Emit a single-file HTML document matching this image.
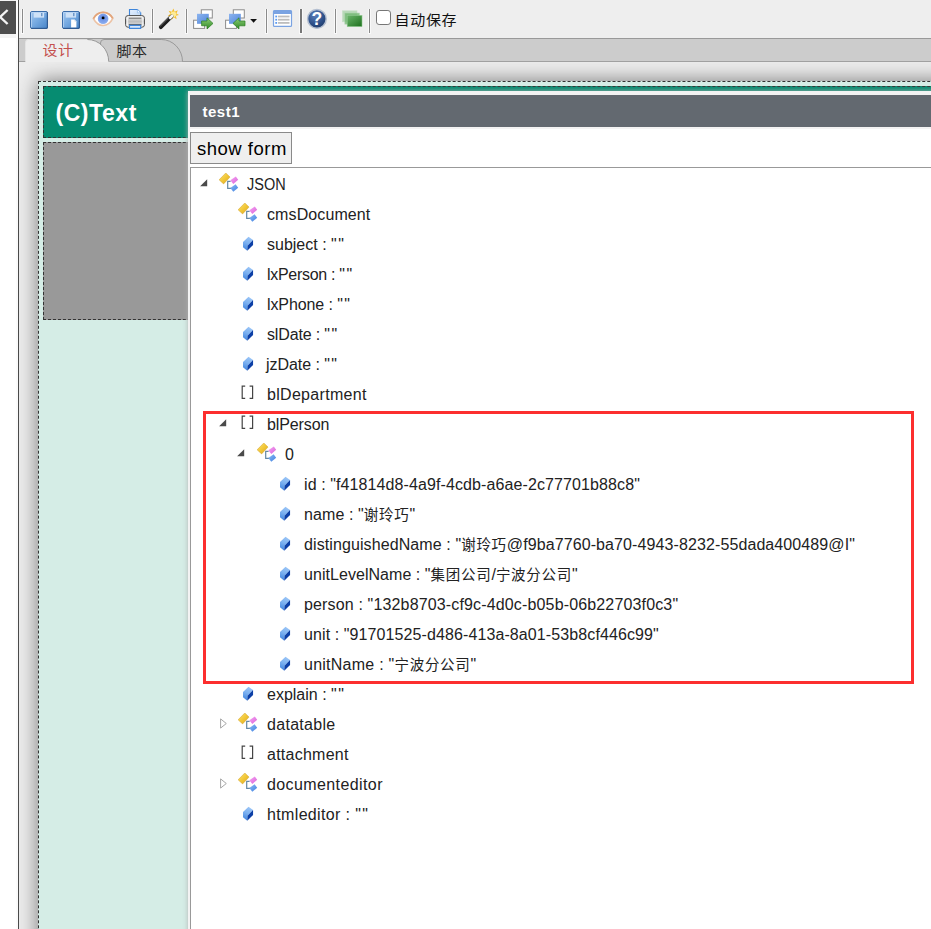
<!DOCTYPE html>
<html lang="zh-CN">
<head>
<meta charset="utf-8">
<title>form designer</title>
<style>
html,body{margin:0;padding:0;}
body{width:931px;height:929px;overflow:hidden;background:#fff;position:relative;
 font-family:"Liberation Sans","Noto Sans CJK SC",sans-serif;font-size:15px;color:#222;}
.abs{position:absolute;}
#collapse{left:0;top:1px;width:16px;height:32.6px;background:#4d4d4d;}
#vline{left:18px;top:0;width:1px;height:929px;background:#4a4a4a;}
#vstrip{left:16px;top:0;width:2px;height:929px;background:#fbfbfb;}
#toolbar{left:19px;top:0;width:912px;height:38px;background:#eeeeee;border-bottom:1px solid #999;}
.sep{position:absolute;top:9px;width:1px;height:24px;background:#8c8c8c;}
#tabbar{left:19px;top:39px;width:912px;height:22px;background:#cccccc;border-bottom:1px solid #a0a0a0;}
#design{left:19px;top:62px;width:912px;height:867px;background:#eeeeee;overflow:hidden;}
#form{left:19px;top:19px;width:1200px;height:1200px;background:#d5ede6;border:1px dashed #333;
 box-shadow:0 0 20px 0px #777;}
#fhead{left:4px;top:4px;width:1180px;height:50px;background:#068c71;border:1px dashed #333;}
#fhead span{position:absolute;left:11.5px;top:10.5px;font-weight:bold;font-size:23px;letter-spacing:0.55px;color:#fff;line-height:30px;white-space:nowrap;}
#fgray{left:4px;top:60px;width:1180px;height:176px;background:#999999;border:1px dashed #333;}
#dialog{left:187.5px;top:91.3px;width:760px;height:900px;background:#f3f3f3;box-shadow:0 0 5px 0 rgba(176,176,176,0.95);}
#dtitle{left:2.5px;top:3.7px;width:760px;height:32px;background:#636970;}
#dtitle span{position:absolute;left:12.5px;top:8px;font-weight:bold;font-size:15px;letter-spacing:0.5px;line-height:18px;color:#fff;}
#dcontent{left:2.5px;top:37.7px;width:760px;height:870px;background:#fff;}
#btn{left:0;top:3px;width:100px;height:30px;border:1px solid #8a8a8a;background:#efefef;}
#btn span{position:absolute;left:6px;top:4px;font-size:18.5px;letter-spacing:0.5px;line-height:24px;color:#000;white-space:nowrap;}
#tree{left:0;top:38px;width:760px;height:800px;border-top:1px solid #999;border-left:1px solid #999;background:#fff;}
.row{position:absolute;height:30px;line-height:30px;white-space:nowrap;font-size:16px;color:#222;}
.cjk{font-size:14.5px;letter-spacing:0.7px;}.q{letter-spacing:1.4px;}
#redbox{left:203px;top:411px;width:705px;height:267px;border:3px solid #fc2e2e;}
</style>
</head>
<body>
<svg width="0" height="0" style="position:absolute">
<defs>
<linearGradient id="g-yel" x1="0" y1="0" x2="1" y2="1"><stop offset="0" stop-color="#fbe27a"/><stop offset="0.5" stop-color="#f2c838"/><stop offset="1" stop-color="#dba41e"/></linearGradient>
<linearGradient id="g-gemt" x1="0.6" y1="0" x2="0.3" y2="1"><stop offset="0" stop-color="#9cc6f7"/><stop offset="0.45" stop-color="#7db2f1"/><stop offset="1" stop-color="#3f84df"/></linearGradient>
<linearGradient id="g-pink" x1="0" y1="0" x2="1" y2="1"><stop offset="0" stop-color="#f7a8f4"/><stop offset="1" stop-color="#d860d8"/></linearGradient>
<linearGradient id="g-blu" x1="0" y1="0" x2="1" y2="1"><stop offset="0" stop-color="#8cbcf5"/><stop offset="1" stop-color="#3f7fe0"/></linearGradient>
</defs>
</svg>

<div class="abs" style="left:0;top:0;width:16px;height:38px;background:#f3f3f3"></div>
<div id="vstrip" class="abs"></div>
<div id="vline" class="abs"></div>
<div id="collapse" class="abs"><svg width="16" height="32" viewBox="0 0 16 32"><path d="M7.6 9 L0.2 16 L7.6 23" fill="none" stroke="#f4f4f4" stroke-width="2.4"/></svg></div>
<div id="toolbar" class="abs">
<svg class="abs" style="left:-19px;top:0" width="480" height="38" viewBox="0 0 480 38">
<defs>
<linearGradient id="g-save" x1="0" y1="0" x2="1" y2="1"><stop offset="0" stop-color="#a4c9f0"/><stop offset="0.5" stop-color="#74a8e0"/><stop offset="1" stop-color="#4784c8"/></linearGradient>
<linearGradient id="g-prn" x1="0" y1="0" x2="0" y2="1"><stop offset="0" stop-color="#f4f4f4"/><stop offset="0.5" stop-color="#bdbdbd"/><stop offset="1" stop-color="#e8e8e8"/></linearGradient>
<linearGradient id="g-paper" x1="0" y1="0" x2="1" y2="1"><stop offset="0" stop-color="#e6f0fd"/><stop offset="1" stop-color="#bcd6f7"/></linearGradient>
<radialGradient id="g-help" cx="0.4" cy="0.3" r="0.8"><stop offset="0" stop-color="#5b80bb"/><stop offset="0.6" stop-color="#2d4f88"/><stop offset="1" stop-color="#1c3560"/></radialGradient>
<linearGradient id="g-grn" x1="0" y1="0" x2="1" y2="1"><stop offset="0" stop-color="#6bb56b"/><stop offset="1" stop-color="#1d701d"/></linearGradient>
<linearGradient id="g-arrow" x1="0" y1="0" x2="0" y2="1"><stop offset="0" stop-color="#8fce7a"/><stop offset="1" stop-color="#2f8a24"/></linearGradient>
<linearGradient id="g-blue" x1="0" y1="0" x2="1" y2="1"><stop offset="0" stop-color="#8db4ee"/><stop offset="1" stop-color="#4f86dc"/></linearGradient>
<radialGradient id="g-iris" cx="0.5" cy="0.4" r="0.6"><stop offset="0" stop-color="#5f86e0"/><stop offset="1" stop-color="#8fb0f0"/></radialGradient>
</defs>
<!-- separators -->
<g fill="#f9f9f9">
<rect x="21" y="9" width="3" height="25"/><rect x="151" y="9" width="3" height="25"/><rect x="185" y="9" width="3" height="25"/><rect x="265" y="9" width="3" height="25"/><rect x="299" y="9" width="4" height="25"/><rect x="334" y="9" width="3" height="25"/><rect x="368" y="9" width="3" height="25"/>
</g>
<g fill="#8a8a8a">
<rect x="22" y="9" width="1" height="24"/>
<rect x="152" y="9" width="1" height="24"/>
<rect x="186" y="9" width="1" height="24"/>
<rect x="266" y="9" width="1" height="24"/>
<rect x="300" y="9" width="2" height="24" fill="#777"/>
<rect x="335" y="9" width="1" height="24"/>
<rect x="369" y="9" width="1" height="24"/>
</g>
<!-- save -->
<g id="ic-save">
<rect x="30.5" y="11.5" width="17" height="17" rx="1.5" fill="url(#g-save)" stroke="#3d6eaa" stroke-width="1"/>
<rect x="33.7" y="12.6" width="10.4" height="5" fill="#cfe2f7"/>
<rect x="41" y="13" width="1.5" height="3.2" fill="#6d97c9"/>
<path d="M31.5 27.5 L31.5 12.5 L46.5 12.5" fill="none" stroke="#c4ddf7" stroke-width="0.8" opacity="0.8"/>
<path d="M31 28.3 L47.3 28.3 L47.3 12" fill="none" stroke="#2c5288" stroke-width="1" opacity="0.85"/>
</g>
<!-- save as -->
<g>
<rect x="62.5" y="11.5" width="17" height="17" rx="1.5" fill="url(#g-save)" stroke="#3d6eaa" stroke-width="1"/>
<rect x="65.7" y="12.6" width="10.4" height="5" fill="#cfe2f7"/>
<rect x="73" y="13" width="1.5" height="3.2" fill="#6d97c9"/>
<path d="M63.5 27.5 L63.5 12.5 L78.5 12.5" fill="none" stroke="#c4ddf7" stroke-width="0.8" opacity="0.8"/>
<path d="M71.1 19.5 L74.6 19.5 L76.4 21.5 L76.4 27.4 L71.1 27.4 Z" fill="#ffffff"/>
<path d="M74.6 19.5 L74.6 21.5 L76.4 21.5 Z" fill="#c9d3e0"/>
<path d="M63 28.3 L79.3 28.3 L79.3 12" fill="none" stroke="#2c5288" stroke-width="1" opacity="0.85"/>
</g>
<!-- eye -->
<g>
<path d="M93.4 18.6 C96 13.6 99.5 12.3 103.1 12.3 C107 12.3 110.5 13.8 112.8 18.4 C110.5 23 107 25.5 103.1 25.5 C99.5 25.5 96 23.4 93.4 18.6 Z" fill="#fff" stroke="#ecc3a6" stroke-width="1.7"/>
<path d="M93.4 18.6 C96 13.6 99.5 12.3 103.1 12.3 C107 12.3 110.5 13.8 112.8 18.4" fill="none" stroke="#e2a57c" stroke-width="1.8"/>
<circle cx="103.1" cy="18.7" r="5.3" fill="url(#g-iris)"/>
<circle cx="103.1" cy="17.9" r="1.45" fill="#000"/>
</g>
<!-- printer -->
<g>
<path d="M129.5 17.5 L129.5 9.5 L137.4 9.5 L140.7 12.8 L140.7 17.5 Z" fill="url(#g-paper)" stroke="#3f86da" stroke-width="1.1"/>
<path d="M137.4 9.5 L137.4 12.8 L140.7 12.8" fill="#f3f8fe" stroke="#7fb0ea" stroke-width="0.6"/>
<rect x="125.5" y="15.5" width="19" height="11.8" rx="2.8" fill="url(#g-prn)" stroke="#555" stroke-width="1"/>
<rect x="128.8" y="17.7" width="12.6" height="1" fill="#6e6e6e"/>
<rect x="126.6" y="17" width="1.6" height="9" fill="#fff" opacity="0.7"/>
<rect x="141.8" y="17" width="1.6" height="9" fill="#fff" opacity="0.6"/>
<rect x="128.8" y="24.2" width="12.6" height="1.2" fill="#4a4a4a"/>
<path d="M129.5 25.4 L140.7 25.4 L140.7 28.4 L129.5 28.4 Z" fill="#d9e8fb" stroke="#3f86da" stroke-width="1.1"/>
</g>
<!-- wand -->
<g>
<path d="M173.4 8.6 L174.6 11.8 L177.8 10.2 L176.4 13.4 L179 15 L175.9 15.8 L176.6 19.2 L173.8 17.2 L171.6 19.8 L171.2 16.4 L167.8 16 L170.4 13.8 L168.6 10.8 L171.8 11.8 Z" fill="#f5bf2e"/>
<circle cx="173.4" cy="14.2" r="2.8" fill="#fdeb96"/>
<path d="M160.8 27.2 L171.6 16.4" stroke="#1c1c1c" stroke-width="3.8" stroke-linecap="round"/>
<path d="M170.2 17.8 L172 16" stroke="#f4f4f4" stroke-width="3" stroke-linecap="round"/>
<path d="M160.2 26.2 L168.8 17.6" stroke="#7c7c7c" stroke-width="0.9"/>
</g>
<!-- export -->
<g>
<rect x="201.3" y="9.8" width="11" height="8.2" fill="#fff" stroke="#8c8c8c" stroke-width="1"/>
<rect x="193.6" y="20.2" width="11" height="8.2" fill="#fff" stroke="#8c8c8c" stroke-width="1"/>
<rect x="197" y="13.8" width="11.8" height="10" fill="url(#g-blue)"/>
<path d="M201.6 21 L207 21 L207 17.8 L213 23.4 L207 29 L207 25.8 L201.6 25.8 Z" fill="url(#g-arrow)" stroke="#2b7d21" stroke-width="0.7"/>
</g>
<!-- import -->
<g>
<rect x="233.3" y="9.8" width="11" height="8.2" fill="#fff" stroke="#8c8c8c" stroke-width="1"/>
<rect x="225.6" y="20.2" width="11" height="8.2" fill="#fff" stroke="#8c8c8c" stroke-width="1"/>
<rect x="229" y="13.8" width="11.8" height="10" fill="url(#g-blue)"/>
<path d="M245 21 L239 21 L239 17.8 L233 23.4 L239 29 L239 25.8 L245 25.8 Z" fill="url(#g-arrow)" stroke="#2b7d21" stroke-width="0.7"/>
<path d="M250.2 19 L257 19 L253.6 22.8 Z" fill="#111"/>
</g>
<!-- form list -->
<g>
<rect x="273.5" y="10.6" width="18" height="15.8" rx="1" fill="#fff" stroke="#7aa3e2" stroke-width="1.2"/>
<rect x="273.5" y="10.6" width="18" height="3.4" fill="#7aa3e2"/>
<g fill="#bdbdbd"><rect x="278" y="15.6" width="11.5" height="1.8"/><rect x="278" y="18.8" width="11.5" height="1.8"/><rect x="278" y="22" width="11.5" height="1.8"/></g>
<g fill="#5b9af0"><rect x="275.3" y="15.6" width="1.8" height="1.8"/><rect x="275.3" y="18.8" width="1.8" height="1.8"/><rect x="275.3" y="22" width="1.8" height="1.8"/></g>
</g>
<!-- help -->
<g>
<circle cx="316.9" cy="18.9" r="9.3" fill="url(#g-help)" stroke="#b4bfd0" stroke-width="1.5"/>
<text x="316.9" y="25" text-anchor="middle" font-family="Liberation Sans, sans-serif" font-weight="bold" font-size="17.5" fill="#fff">?</text>
</g>
<!-- green stack -->
<g>
<rect x="342.4" y="10.8" width="14.6" height="11" fill="#8cc78c" opacity="0.55" stroke="#a9d4a9" stroke-width="0.6"/>
<rect x="344.8" y="13" width="14.8" height="11.2" fill="#6db56d" opacity="0.75" stroke="#a9d4a9" stroke-width="0.6"/>
<rect x="347.2" y="15.4" width="14.8" height="11.2" fill="url(#g-grn)" stroke="#8fc98f" stroke-width="0.6"/>
</g>
<!-- checkbox -->
<rect x="376.5" y="10.5" width="14" height="14" rx="2.6" fill="#fff" stroke="#767676" stroke-width="1"/>
</svg>
<div class="abs" style="left:375.5px;top:9px;font-size:15px;line-height:22px;color:#111;white-space:nowrap;letter-spacing:0.7px;transform:scaleY(0.91);transform-origin:0 50%">自动保存</div>

</div>
<div id="tabbar" class="abs">
<svg class="abs" style="left:-19px;top:0" width="931" height="23" viewBox="0 39 931 23">
<path d="M100.5 61.5 L100.5 43 Q100.5 39.5 104 39.5 L161.2 39.5 A21.3 22 0 0 1 182.5 61.5" fill="#cccccc" stroke="#999" stroke-width="1"/>
<path d="M25.5 62.5 L25.5 42.5 Q25.5 39.5 28.5 39.5 L87.4 39.5 A21.3 22 0 0 1 108.7 61.5 L108.7 62.5 Z" fill="#eeeeee"/>
<path d="M87.4 39.5 A21.3 22 0 0 1 108.7 61.5" fill="none" stroke="#999" stroke-width="1"/>
<path d="M25.5 61.5 L25.5 42.5 Q25.5 39.5 28.5 39.5" fill="none" stroke="#e4e4e4" stroke-width="1"/>
</svg>
<div class="abs" style="left:23.5px;top:1px;font-size:15px;line-height:20px;color:#c4504e;white-space:nowrap;letter-spacing:0.4px;transform:scaleY(0.93);transform-origin:0 100%">设计</div>
<div class="abs" style="left:97.5px;top:1.6px;font-size:15px;line-height:20px;color:#2a2a2a;white-space:nowrap;letter-spacing:0.4px;transform:scaleY(0.93);transform-origin:0 100%">脚本</div>

</div>
<div id="design" class="abs">
 <div id="form" class="abs">
  <div id="fhead" class="abs"><span>(C)Text</span></div>
  <div id="fgray" class="abs"></div>
 </div>
</div>
<div id="dialog" class="abs">
 <div id="dtitle" class="abs"><span>test1</span></div>
 <div id="dcontent" class="abs">
  <div id="btn" class="abs"><span>show form</span></div>
  <div id="tree" class="abs">
<svg class="abs" style="left:8.9px;top:11.3px" width="8" height="8" viewBox="0 0 8 8"><path d="M7.2 0.2 L7.2 7.3 L0.1 7.3 Z" fill="#4a4a4a"/></svg>
<svg class="abs" style="left:28.0px;top:5.0px" width="20" height="20" viewBox="0 0 20 20"><path d="M11.6 8.4 L8.7 8.4 L8.7 15.4 L12 15.4" fill="none" stroke="#6488a4" stroke-width="1.2"/><path d="M0.1 6.8 L6.8 0 L11 4.1 L4.6 10.9 Z" fill="url(#g-yel)" stroke="#d2a024" stroke-width="0.5"/><path d="M11.3 7.2 L16.8 3.4 L19.2 6.8 L14.3 10.9 Z" fill="url(#g-pink)"/><path d="M11.3 15.1 L16.6 11.3 L19.2 14.7 L14.3 18.8 Z" fill="url(#g-blu)"/></svg>
<div class="row" id="r0" style="left:56.3px;top:2px;letter-spacing:-0.200px;font-size:16px;letter-spacing:0;transform:scaleX(0.905);transform-origin:0 50%;">JSON</div>
<svg class="abs" style="left:46.8px;top:35.0px" width="20" height="20" viewBox="0 0 20 20"><path d="M11.6 8.4 L8.7 8.4 L8.7 15.4 L12 15.4" fill="none" stroke="#6488a4" stroke-width="1.2"/><path d="M0.1 6.8 L6.8 0 L11 4.1 L4.6 10.9 Z" fill="url(#g-yel)" stroke="#d2a024" stroke-width="0.5"/><path d="M11.3 7.2 L16.8 3.4 L19.2 6.8 L14.3 10.9 Z" fill="url(#g-pink)"/><path d="M11.3 15.1 L16.6 11.3 L19.2 14.7 L14.3 18.8 Z" fill="url(#g-blu)"/></svg>
<div class="row" id="r1" style="left:76px;top:32px;letter-spacing:0.100px;">cmsDocument</div>
<svg class="abs" style="left:50.7px;top:68.0px" width="12" height="16" viewBox="0 0 12 16"><path d="M6.5 0.7 L11.05 4.1 L5.5 9.7 L5.25 14.8 L1 11.2 L1 6 Z" fill="url(#g-gemt)"/><path d="M11.05 4.1 L11.05 9 L5.25 14.8 L5.5 9.7 Z" fill="#0c3fa6"/></svg>
<div class="row" id="r2" style="left:76px;top:62px;letter-spacing:0.000px;">subject : <span class="q">&quot;</span>&quot;</div>
<svg class="abs" style="left:50.7px;top:98.0px" width="12" height="16" viewBox="0 0 12 16"><path d="M6.5 0.7 L11.05 4.1 L5.5 9.7 L5.25 14.8 L1 11.2 L1 6 Z" fill="url(#g-gemt)"/><path d="M11.05 4.1 L11.05 9 L5.25 14.8 L5.5 9.7 Z" fill="#0c3fa6"/></svg>
<div class="row" id="r3" style="left:76px;top:92px;letter-spacing:-0.300px;">lxPerson : <span class="q">&quot;</span>&quot;</div>
<svg class="abs" style="left:50.7px;top:128.0px" width="12" height="16" viewBox="0 0 12 16"><path d="M6.5 0.7 L11.05 4.1 L5.5 9.7 L5.25 14.8 L1 11.2 L1 6 Z" fill="url(#g-gemt)"/><path d="M11.05 4.1 L11.05 9 L5.25 14.8 L5.5 9.7 Z" fill="#0c3fa6"/></svg>
<div class="row" id="r4" style="left:76px;top:122px;letter-spacing:-0.100px;">lxPhone : <span class="q">&quot;</span>&quot;</div>
<svg class="abs" style="left:50.7px;top:158.0px" width="12" height="16" viewBox="0 0 12 16"><path d="M6.5 0.7 L11.05 4.1 L5.5 9.7 L5.25 14.8 L1 11.2 L1 6 Z" fill="url(#g-gemt)"/><path d="M11.05 4.1 L11.05 9 L5.25 14.8 L5.5 9.7 Z" fill="#0c3fa6"/></svg>
<div class="row" id="r5" style="left:76px;top:152px;letter-spacing:-0.150px;">slDate : <span class="q">&quot;</span>&quot;</div>
<svg class="abs" style="left:50.7px;top:188.0px" width="12" height="16" viewBox="0 0 12 16"><path d="M6.5 0.7 L11.05 4.1 L5.5 9.7 L5.25 14.8 L1 11.2 L1 6 Z" fill="url(#g-gemt)"/><path d="M11.05 4.1 L11.05 9 L5.25 14.8 L5.5 9.7 Z" fill="#0c3fa6"/></svg>
<div class="row" id="r6" style="left:75px;top:182px;letter-spacing:-0.050px;">jzDate : <span class="q">&quot;</span>&quot;</div>
<svg class="abs" style="left:49.0px;top:217.0px" width="15" height="15" viewBox="0 0 15 15"><path d="M5.2 1.1 L2.2 1.1 L2.2 13.3 L5.2 13.3 M9.6 1.1 L12.6 1.1 L12.6 13.3 L9.6 13.3" fill="none" stroke="#444" stroke-width="1.2"/></svg>
<div class="row" id="r7" style="left:76px;top:212px;letter-spacing:0.300px;">blDepartment</div>
<svg class="abs" style="left:27.7px;top:251.3px" width="8" height="8" viewBox="0 0 8 8"><path d="M7.2 0.2 L7.2 7.3 L0.1 7.3 Z" fill="#4a4a4a"/></svg>
<svg class="abs" style="left:49.0px;top:247.0px" width="15" height="15" viewBox="0 0 15 15"><path d="M5.2 1.1 L2.2 1.1 L2.2 13.3 L5.2 13.3 M9.6 1.1 L12.6 1.1 L12.6 13.3 L9.6 13.3" fill="none" stroke="#444" stroke-width="1.2"/></svg>
<div class="row" id="r8" style="left:76px;top:242px;letter-spacing:-0.100px;">blPerson</div>
<svg class="abs" style="left:46.4px;top:281.3px" width="8" height="8" viewBox="0 0 8 8"><path d="M7.2 0.2 L7.2 7.3 L0.1 7.3 Z" fill="#4a4a4a"/></svg>
<svg class="abs" style="left:65.5px;top:275.0px" width="20" height="20" viewBox="0 0 20 20"><path d="M11.6 8.4 L8.7 8.4 L8.7 15.4 L12 15.4" fill="none" stroke="#6488a4" stroke-width="1.2"/><path d="M0.1 6.8 L6.8 0 L11 4.1 L4.6 10.9 Z" fill="url(#g-yel)" stroke="#d2a024" stroke-width="0.5"/><path d="M11.3 7.2 L16.8 3.4 L19.2 6.8 L14.3 10.9 Z" fill="url(#g-pink)"/><path d="M11.3 15.1 L16.6 11.3 L19.2 14.7 L14.3 18.8 Z" fill="url(#g-blu)"/></svg>
<div class="row" id="r9" style="left:94px;top:272px;letter-spacing:0.500px;">0</div>
<svg class="abs" style="left:88.2px;top:308.0px" width="12" height="16" viewBox="0 0 12 16"><path d="M6.5 0.7 L11.05 4.1 L5.5 9.7 L5.25 14.8 L1 11.2 L1 6 Z" fill="url(#g-gemt)"/><path d="M11.05 4.1 L11.05 9 L5.25 14.8 L5.5 9.7 Z" fill="#0c3fa6"/></svg>
<div class="row" id="r10" style="left:113px;top:302px;letter-spacing:0.100px;">id : &quot;f41814d8-4a9f-4cdb-a6ae-2c77701b88c8&quot;</div>
<svg class="abs" style="left:88.2px;top:338.0px" width="12" height="16" viewBox="0 0 12 16"><path d="M6.5 0.7 L11.05 4.1 L5.5 9.7 L5.25 14.8 L1 11.2 L1 6 Z" fill="url(#g-gemt)"/><path d="M11.05 4.1 L11.05 9 L5.25 14.8 L5.5 9.7 Z" fill="#0c3fa6"/></svg>
<div class="row" id="r11" style="left:113px;top:332px;letter-spacing:0.100px;">name : &quot;<span class="cjk">谢玲巧</span>&quot;</div>
<svg class="abs" style="left:88.2px;top:368.0px" width="12" height="16" viewBox="0 0 12 16"><path d="M6.5 0.7 L11.05 4.1 L5.5 9.7 L5.25 14.8 L1 11.2 L1 6 Z" fill="url(#g-gemt)"/><path d="M11.05 4.1 L11.05 9 L5.25 14.8 L5.5 9.7 Z" fill="#0c3fa6"/></svg>
<div class="row" id="r12" style="left:113px;top:362px;letter-spacing:0.100px;">distinguishedName : &quot;<span class="cjk">谢玲巧</span>@f9ba7760-ba70-4943-8232-55dada400489@I&quot;</div>
<svg class="abs" style="left:88.2px;top:398.0px" width="12" height="16" viewBox="0 0 12 16"><path d="M6.5 0.7 L11.05 4.1 L5.5 9.7 L5.25 14.8 L1 11.2 L1 6 Z" fill="url(#g-gemt)"/><path d="M11.05 4.1 L11.05 9 L5.25 14.8 L5.5 9.7 Z" fill="#0c3fa6"/></svg>
<div class="row" id="r13" style="left:113px;top:392px;letter-spacing:0.050px;">unitLevelName : &quot;<span class="cjk">集团公司</span>/<span class="cjk">宁波分公司</span>&quot;</div>
<svg class="abs" style="left:88.2px;top:428.0px" width="12" height="16" viewBox="0 0 12 16"><path d="M6.5 0.7 L11.05 4.1 L5.5 9.7 L5.25 14.8 L1 11.2 L1 6 Z" fill="url(#g-gemt)"/><path d="M11.05 4.1 L11.05 9 L5.25 14.8 L5.5 9.7 Z" fill="#0c3fa6"/></svg>
<div class="row" id="r14" style="left:113px;top:422px;letter-spacing:0.150px;">person : &quot;132b8703-cf9c-4d0c-b05b-06b22703f0c3&quot;</div>
<svg class="abs" style="left:88.2px;top:458.0px" width="12" height="16" viewBox="0 0 12 16"><path d="M6.5 0.7 L11.05 4.1 L5.5 9.7 L5.25 14.8 L1 11.2 L1 6 Z" fill="url(#g-gemt)"/><path d="M11.05 4.1 L11.05 9 L5.25 14.8 L5.5 9.7 Z" fill="#0c3fa6"/></svg>
<div class="row" id="r15" style="left:113px;top:452px;letter-spacing:0.100px;">unit : &quot;91701525-d486-413a-8a01-53b8cf446c99&quot;</div>
<svg class="abs" style="left:88.2px;top:488.0px" width="12" height="16" viewBox="0 0 12 16"><path d="M6.5 0.7 L11.05 4.1 L5.5 9.7 L5.25 14.8 L1 11.2 L1 6 Z" fill="url(#g-gemt)"/><path d="M11.05 4.1 L11.05 9 L5.25 14.8 L5.5 9.7 Z" fill="#0c3fa6"/></svg>
<div class="row" id="r16" style="left:113px;top:482px;letter-spacing:0.250px;">unitName : &quot;<span class="cjk">宁波分公司</span>&quot;</div>
<svg class="abs" style="left:50.7px;top:518.0px" width="12" height="16" viewBox="0 0 12 16"><path d="M6.5 0.7 L11.05 4.1 L5.5 9.7 L5.25 14.8 L1 11.2 L1 6 Z" fill="url(#g-gemt)"/><path d="M11.05 4.1 L11.05 9 L5.25 14.8 L5.5 9.7 Z" fill="#0c3fa6"/></svg>
<div class="row" id="r17" style="left:76px;top:512px;letter-spacing:0.000px;">explain : <span class="q">&quot;</span>&quot;</div>
<svg class="abs" style="left:29.0px;top:550.0px" width="8" height="12" viewBox="0 0 8 12"><path d="M0.6 0.9 L6.3 5.5 L0.6 10.1 Z" fill="#fff" stroke="#a6a6a6" stroke-width="1"/></svg>
<svg class="abs" style="left:46.8px;top:545.0px" width="20" height="20" viewBox="0 0 20 20"><path d="M11.6 8.4 L8.7 8.4 L8.7 15.4 L12 15.4" fill="none" stroke="#6488a4" stroke-width="1.2"/><path d="M0.1 6.8 L6.8 0 L11 4.1 L4.6 10.9 Z" fill="url(#g-yel)" stroke="#d2a024" stroke-width="0.5"/><path d="M11.3 7.2 L16.8 3.4 L19.2 6.8 L14.3 10.9 Z" fill="url(#g-pink)"/><path d="M11.3 15.1 L16.6 11.3 L19.2 14.7 L14.3 18.8 Z" fill="url(#g-blu)"/></svg>
<div class="row" id="r18" style="left:76px;top:542px;letter-spacing:0.300px;">datatable</div>
<svg class="abs" style="left:49.0px;top:577.0px" width="15" height="15" viewBox="0 0 15 15"><path d="M5.2 1.1 L2.2 1.1 L2.2 13.3 L5.2 13.3 M9.6 1.1 L12.6 1.1 L12.6 13.3 L9.6 13.3" fill="none" stroke="#444" stroke-width="1.2"/></svg>
<div class="row" id="r19" style="left:76px;top:572px;letter-spacing:0.250px;">attachment</div>
<svg class="abs" style="left:29.0px;top:610.0px" width="8" height="12" viewBox="0 0 8 12"><path d="M0.6 0.9 L6.3 5.5 L0.6 10.1 Z" fill="#fff" stroke="#a6a6a6" stroke-width="1"/></svg>
<svg class="abs" style="left:46.8px;top:605.0px" width="20" height="20" viewBox="0 0 20 20"><path d="M11.6 8.4 L8.7 8.4 L8.7 15.4 L12 15.4" fill="none" stroke="#6488a4" stroke-width="1.2"/><path d="M0.1 6.8 L6.8 0 L11 4.1 L4.6 10.9 Z" fill="url(#g-yel)" stroke="#d2a024" stroke-width="0.5"/><path d="M11.3 7.2 L16.8 3.4 L19.2 6.8 L14.3 10.9 Z" fill="url(#g-pink)"/><path d="M11.3 15.1 L16.6 11.3 L19.2 14.7 L14.3 18.8 Z" fill="url(#g-blu)"/></svg>
<div class="row" id="r20" style="left:76px;top:602px;letter-spacing:0.400px;">documenteditor</div>
<svg class="abs" style="left:50.7px;top:638.0px" width="12" height="16" viewBox="0 0 12 16"><path d="M6.5 0.7 L11.05 4.1 L5.5 9.7 L5.25 14.8 L1 11.2 L1 6 Z" fill="url(#g-gemt)"/><path d="M11.05 4.1 L11.05 9 L5.25 14.8 L5.5 9.7 Z" fill="#0c3fa6"/></svg>
<div class="row" id="r21" style="left:76px;top:632px;letter-spacing:0.350px;">htmleditor : <span class="q">&quot;</span>&quot;</div>
  </div>
 </div>
</div>
<div id="redbox" class="abs"></div>
</body>
</html>
